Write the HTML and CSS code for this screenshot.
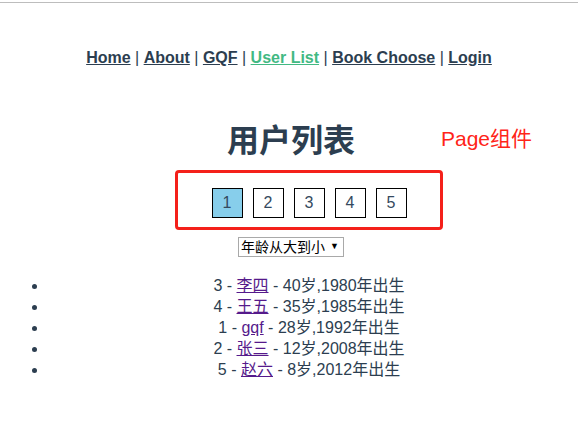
FILE: index.html
```html
<!DOCTYPE html>
<html lang="zh">
<head>
<meta charset="utf-8">
<link rel="stylesheet" href="styles.css">
</head>
<body>
<div class="topline"></div>
<div id="app">
  <nav class="nav">
    <a href="#" class="nav-link">Home</a> | <a href="#" class="nav-link">About</a> | <a href="#" class="nav-link">GQF</a> | <a href="#" class="nav-link active">User List</a> | <a href="#" class="nav-link">Book Choose</a> | <a href="#" class="nav-link">Login</a>
  </nav>
  <div class="page">
    <h1 class="title">用户列表</h1>
    <div class="note">Page组件</div>
    <div class="pager-wrap">
      <ul class="pager">
        <li class="pg current">1</li>
        <li class="pg">2</li>
        <li class="pg">3</li>
        <li class="pg">4</li>
        <li class="pg">5</li>
      </ul>
      <div class="highlight"></div>
    </div>
    <div class="sort">
      <span class="select-box">
        <select class="sort-select"><option>年龄从大到小</option></select>
        <span class="select-arrow">▼</span>
      </span>
    </div>
    <ul class="users">
      <li>3 - <a href="#" class="ulink">李四</a> - 40岁,1980年出生</li>
      <li>4 - <a href="#" class="ulink">王五</a> - 35岁,1985年出生</li>
      <li>1 - <a href="#" class="ulink">gqf</a> - 28岁,1992年出生</li>
      <li>2 - <a href="#" class="ulink">张三</a> - 12岁,2008年出生</li>
      <li>5 - <a href="#" class="ulink">赵六</a> - 8岁,2012年出生</li>
    </ul>
  </div>
</div>
</body>
</html>
```
FILE: styles.css
```css
html, body {
  margin: 0;
  padding: 0;
  background: #fff;
}
body {
  font-family: "Liberation Sans", Arial, "Noto Sans CJK SC", sans-serif;
  color: #2c3e50;
}
.topline {
  height: 2px;
  border-bottom: 1px solid #bdbdbd;
}
#app {
  margin: 0 8px;
  text-align: center;
}
.nav {
  padding-top: 45px;
  font-size: 16px;
  line-height: 20px;
  font-weight: normal;
  color: #2c3e50;
}
.nav-link {
  color: #2c3e50;
  font-weight: bold;
}
.nav-link.active {
  color: #42b983;
}
.page {
  position: relative;
}
.title {
  margin: 0;
  padding: 53px 0 0 4px;
  font-size: 32px;
  line-height: 40px;
  font-weight: bold;
}
.note {
  position: absolute;
  left: 433px;
  top: 59px;
  font-size: 21px;
  line-height: 24px;
  color: #ff2418;
  font-weight: normal;
}
.pager-wrap {
  position: relative;
  padding: 27px 0 13px;
}
.pager {
  list-style: none;
  margin: 0;
  padding: 0 0 0 40px;
  display: flex;
  justify-content: center;
  gap: 10px;
}
.pg {
  box-sizing: border-box;
  width: 31px;
  height: 30px;
  border: 1px solid #000;
  font-size: 16px;
  line-height: 28px;
  color: #34495e;
}
.pg.current {
  background: #87ceeb;
}
.highlight {
  position: absolute;
  left: 167px;
  top: 9px;
  width: 262px;
  height: 54px;
  border: 3px solid #f4201a;
  border-radius: 4px;
}
.sort {
  padding-top: 6px;
  height: 20px;
}
.select-box {
  position: relative;
  display: inline-block;
  vertical-align: top;
  margin-left: 4px;
}
.sort-select {
  appearance: none;
  -webkit-appearance: none;
  box-sizing: border-box;
  display: block;
  width: 106px;
  height: 20px;
  font-size: 14px;
  line-height: 18px;
  font-family: "Liberation Sans", "Noto Sans CJK SC", sans-serif;
  color: #000;
  border: 1px solid #a9a9a9;
  border-radius: 0;
  background: #fff;
  padding: 0 0 0 2px;
  text-align: left;
}
.select-arrow {
  position: absolute;
  right: 5px;
  top: 3px;
  font-size: 9px;
  line-height: 12px;
  color: #000;
  pointer-events: none;
}
.users {
  margin: 18px 0 0;
  padding-left: 40px;
  font-size: 16px;
  line-height: 21px;
}
.ulink {
  color: #551a8b;
}
```
